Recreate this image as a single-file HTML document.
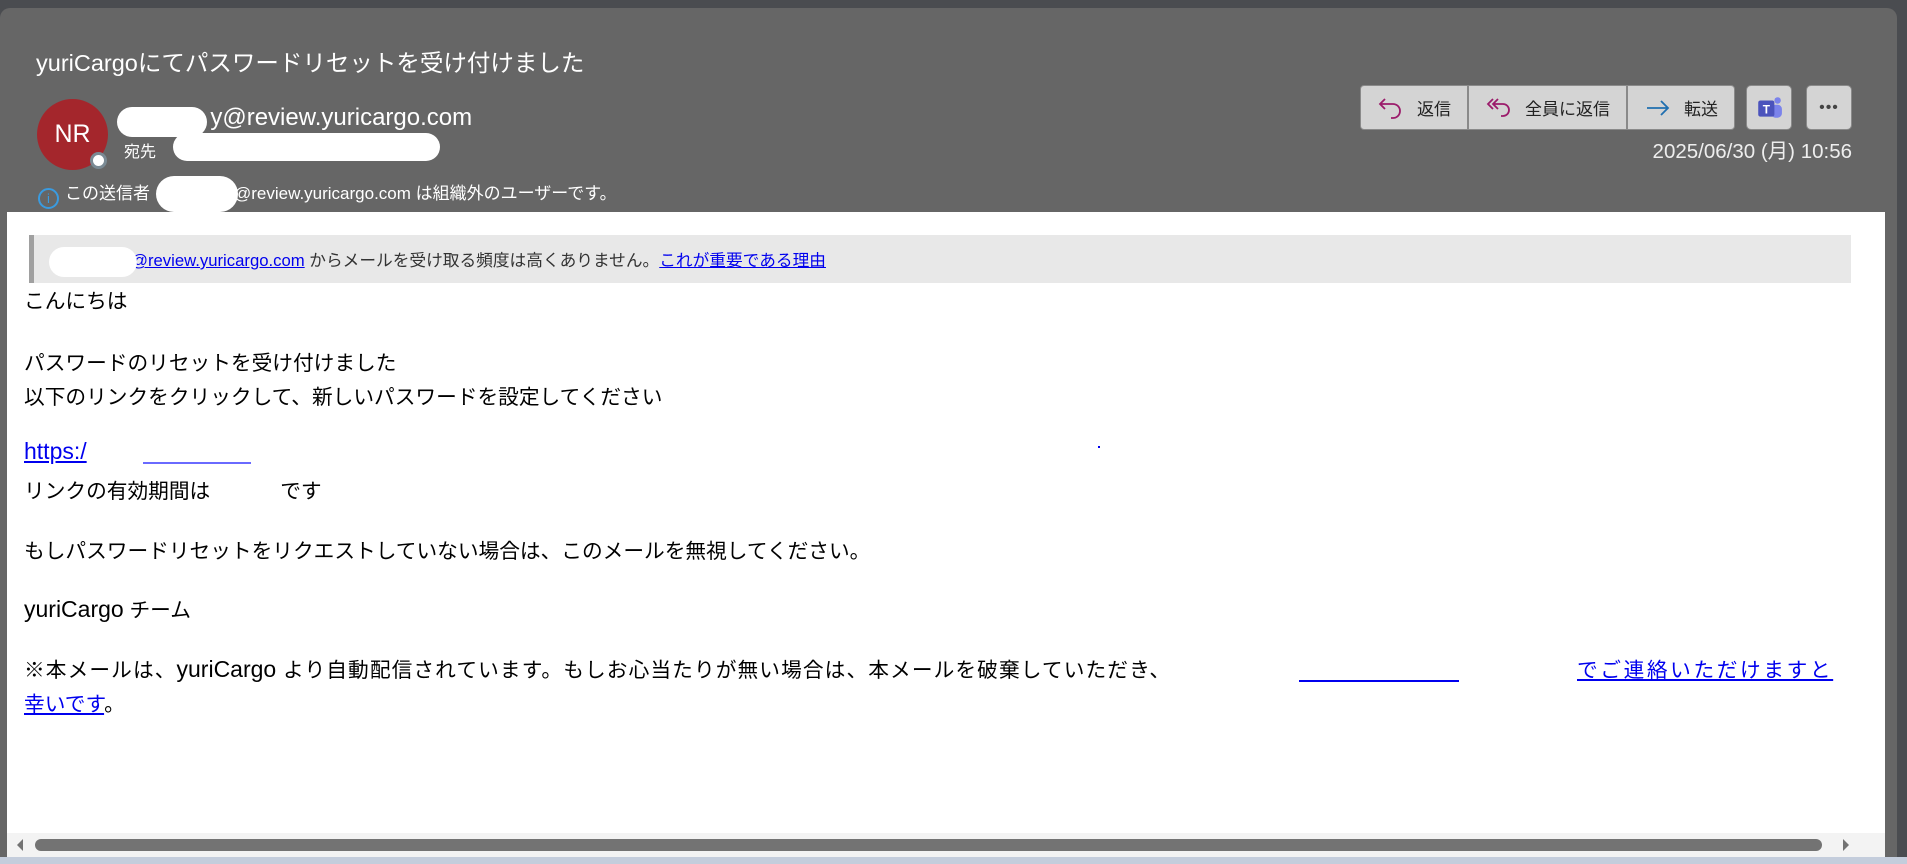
<!DOCTYPE html>
<html><head><meta charset="utf-8"><style>
*{margin:0;padding:0;box-sizing:border-box}
body{width:1907px;height:864px;background:#4a4c50;font-family:"Liberation Sans","Noto Sans CJK JP",sans-serif;position:relative;overflow:hidden}
.panel{position:absolute;left:0;top:8px;width:1897px;height:856px;background:#666;border-radius:10px 10px 0 0}
.abs{position:absolute;white-space:nowrap}
.title{left:36px;top:44px;font-size:23.5px;color:#fff}
.av{left:37px;top:99px;width:71px;height:71px;border-radius:50%;background:#a4262c;color:#fff;font-size:25px;text-align:center;line-height:71px}
.dot{left:90px;top:152px;width:17px;height:17px;border-radius:50%;background:#fff;border:3px solid #7a8a94}
.blob{background:#fff;border-radius:20px}
.from{left:117px;top:104px;font-size:24px;color:#fff}
.to{left:124px;top:138px;font-size:16px;color:#fff}
.info{left:38px;top:179px;font-size:17px;color:#fff}
.btns{left:1360px;top:85px;height:45px;display:flex;border:1px solid #8a8a8a;border-radius:4px;overflow:hidden;background:#d4d4d4}
.b{display:flex;align-items:center;gap:12px;padding:0 16px;font-size:17px;color:#222;border-right:2px solid #8a8a8a}
.b:last-child{border-right:none}
.sq{top:85px;width:46px;height:45px;background:#d4d4d4;border:1px solid #8a8a8a;border-radius:5px;display:flex;align-items:center;justify-content:center}
.date{right:55px;top:134px;font-size:20.5px;color:#eee}
.main{position:absolute;left:7px;top:212px;width:1878px;height:645px;background:#fff}
.banner{position:absolute;left:22px;top:23px;width:1822px;height:48px;background:#e8e8e8;border-left:5px solid #a0a0a0;font-size:16.7px;color:#333;padding:12px 0 0 0;white-space:nowrap}
a{color:#0000ee;text-decoration:underline}
.txt{position:absolute;left:17px;font-size:20.7px;color:#000;white-space:nowrap}
.l{font-size:23px}
.sb{position:absolute;left:7px;top:833px;width:1878px;height:24px;background:#f3f3f3}
.thumb{position:absolute;left:35px;top:839px;width:1787px;height:12px;background:#737373;border-radius:6px}
.bot{position:absolute;left:0;top:857px;width:1907px;height:7px;background:#c4cddc}
</style></head><body>
<div class="panel"></div>
<div class="abs title">yuriCargoにてパスワードリセットを受け付けました</div>
<div class="abs av">NR</div>
<div class="abs dot"></div>
<div class="abs from">&nbsp; &nbsp; &nbsp; &nbsp; &nbsp; &nbsp; &nbsp; y@review.yuricargo.com</div>
<div class="abs blob" style="left:117px;top:107px;width:90px;height:30px"></div>
<div class="abs to">宛先</div>
<div class="abs blob" style="left:173px;top:133px;width:267px;height:28px"></div>
<div class="abs info"><span style="display:inline-block;width:21px;height:21px;border:2px solid #3a9be0;border-radius:50%;color:#3a9be0;font-size:13px;text-align:center;line-height:17px;vertical-align:-4px;margin-right:6px">i</span>この送信者<span style="display:inline-block;width:84px"></span>@review.yuricargo.com は組織外のユーザーです。</div>
<div class="abs blob" style="left:156px;top:176px;width:82px;height:36px"></div>
<div class="abs btns">
<div class="b"><svg width="28" height="24" viewBox="0 0 28 24"><path d="M8 3 L3 8 L8 13 M3 8 H16 A7 7 0 0 1 16 22 H14" fill="none" stroke="#9b1b6b" stroke-width="1.8"/></svg>返信</div>
<div class="b"><svg width="28" height="24" viewBox="0 0 28 24"><path d="M8 3 L3 8 L8 13 M13 3 L8 8 L13 13 M8 8 H18 A6 6 0 0 1 18 20 H16" fill="none" stroke="#9b1b6b" stroke-width="1.8"/></svg>全員に返信</div>
<div class="b"><svg width="28" height="24" viewBox="0 0 28 24"><path d="M3 12 H24 M17 5 L24 12 L17 19" fill="none" stroke="#1f6fb0" stroke-width="1.8"/></svg>転送</div>
</div>
<div class="abs sq" style="left:1746px"><svg width="28" height="28" viewBox="0 0 26 26"><circle cx="21" cy="6" r="3" fill="#7b83eb"/><rect x="15" y="10" width="10" height="12" rx="4" fill="#7b83eb"/><rect x="3" y="6" width="15" height="15" rx="2" fill="#4b53bc"/><text x="10.5" y="18" font-size="11" fill="#fff" text-anchor="middle" font-family="Liberation Sans" font-weight="bold">T</text></svg></div>
<div class="abs sq" style="left:1806px;font-size:16px;color:#444;letter-spacing:1px">•••</div>
<div class="abs date">2025/06/30 (月) 10:56</div>
<div class="main">
<div class="banner"><span style="display:inline-block;width:97px"></span><a>@review.yuricargo.com</a> からメールを受け取る頻度は高くありません。<a>これが重要である理由</a></div>
<div class="abs blob" style="left:42px;top:35px;width:88px;height:30px"></div>
<div class="txt" style="top:72px">こんにちは</div>
<div class="txt" style="top:134px">パスワードのリセットを受け付けました</div>
<div class="txt" style="top:168px">以下のリンクをクリックして、新しいパスワードを設定してください</div>
<div class="txt" style="top:226px"><a class="l">https:/</a></div>
<div class="abs" style="left:136px;top:250px;width:108px;border-bottom:2px solid #6a6aff"></div>
<div class="abs" style="left:1091px;top:234px;width:2px;height:2px;background:#00e"></div>
<div class="txt" style="top:262px">リンクの有効期間は<span style="display:inline-block;width:70px"></span>です</div>
<div class="txt" style="top:322px">もしパスワードリセットをリクエストしていない場合は、このメールを無視してください。</div>
<div class="txt" style="top:381px"><span class="l">yuriCargo</span> チーム</div>
<div class="txt" style="top:441px;letter-spacing:1.1px">※本メールは、<span class="l" style="letter-spacing:0">yuriCargo</span> より自動配信されています。もしお心当たりが無い場合は、本メールを破棄していただき、</div>
<div class="abs" style="left:1292px;top:468px;width:160px;border-bottom:2px solid #00e"></div>
<div class="txt" style="top:441px;left:1570px;letter-spacing:2.6px"><a>でご連絡いただけますと</a></div>
<div class="txt" style="top:475px"><a>幸いです</a>。</div>
</div>
<div class="sb"></div>
<svg class="abs" style="left:14px;top:838px" width="12" height="14"><path d="M9 1 L3 7 L9 13Z" fill="#737373"/></svg>
<svg class="abs" style="left:1840px;top:838px" width="12" height="14"><path d="M3 1 L9 7 L3 13Z" fill="#737373"/></svg>
<div class="thumb"></div>
<div class="bot"></div>
</body></html>
